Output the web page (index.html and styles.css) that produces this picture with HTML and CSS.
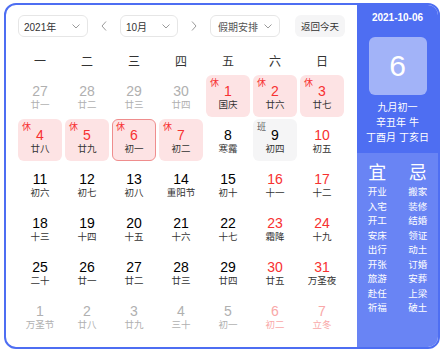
FILE: index.html
```html
<!DOCTYPE html>
<html lang="zh-CN">
<head>
    <meta charset="UTF-8">
    <title>万年历</title>
    <link rel="stylesheet" href="styles.css">
</head>
<body>

    <div class="calendar">
        <div class="main">
            <div class="toolbar">
                <div class="select select-year">
                    <span>2021年</span>
                    <svg width="8" height="5" viewBox="0 0 8 5"><path d="M.5.5 4 4 7.5.5" fill="none" stroke="#9a9a9a"/></svg>
                </div>
                <div class="nav">
                    <svg width="6" height="10" viewBox="0 0 6 10"><path d="M5 .5 1 5l4 4.5" fill="none" stroke="#9a9a9a"/></svg>
                </div>
                <div class="select select-month">
                    <span>10月</span>
                    <svg width="8" height="5" viewBox="0 0 8 5"><path d="M.5.5 4 4 7.5.5" fill="none" stroke="#9a9a9a"/></svg>
                </div>
                <div class="nav">
                    <svg width="6" height="10" viewBox="0 0 6 10"><path d="M1 .5 5 5 1 9.5" fill="none" stroke="#9a9a9a"/></svg>
                </div>
                <div class="select select-holiday">
                    <span>假期安排</span>
                    <svg width="8" height="5" viewBox="0 0 8 5"><path d="M.5.5 4 4 7.5.5" fill="none" stroke="#9a9a9a"/></svg>
                </div>
                <div class="today-btn">返回今天</div>
            </div>

            <div class="weekdays">
                <span>一</span><span>二</span><span>三</span><span>四</span><span>五</span><span>六</span><span>日</span>
            </div>

            <div class="days">
                <div class="day other"><b>27</b><i>廿一</i></div>
                <div class="day other"><b>28</b><i>廿二</i></div>
                <div class="day other"><b>29</b><i>廿三</i></div>
                <div class="day other"><b>30</b><i>廿四</i></div>
                <div class="day rest"><span class="tag">休</span><b>1</b><i>国庆</i></div>
                <div class="day rest"><span class="tag">休</span><b>2</b><i>廿六</i></div>
                <div class="day rest"><span class="tag">休</span><b>3</b><i>廿七</i></div>

                <div class="day rest"><span class="tag">休</span><b>4</b><i>廿八</i></div>
                <div class="day rest"><span class="tag">休</span><b>5</b><i>廿九</i></div>
                <div class="day rest today"><span class="tag">休</span><b>6</b><i>初一</i></div>
                <div class="day rest"><span class="tag">休</span><b>7</b><i>初二</i></div>
                <div class="day"><b>8</b><i>寒露</i></div>
                <div class="day work"><span class="tag">班</span><b>9</b><i>初四</i></div>
                <div class="day weekend"><b>10</b><i>初五</i></div>

                <div class="day"><b>11</b><i>初六</i></div>
                <div class="day"><b>12</b><i>初七</i></div>
                <div class="day"><b>13</b><i>初八</i></div>
                <div class="day"><b>14</b><i>重阳节</i></div>
                <div class="day"><b>15</b><i>初十</i></div>
                <div class="day weekend"><b>16</b><i>十一</i></div>
                <div class="day weekend"><b>17</b><i>十二</i></div>

                <div class="day"><b>18</b><i>十三</i></div>
                <div class="day"><b>19</b><i>十四</i></div>
                <div class="day"><b>20</b><i>十五</i></div>
                <div class="day"><b>21</b><i>十六</i></div>
                <div class="day"><b>22</b><i>十七</i></div>
                <div class="day weekend"><b>23</b><i>霜降</i></div>
                <div class="day weekend"><b>24</b><i>十九</i></div>

                <div class="day"><b>25</b><i>二十</i></div>
                <div class="day"><b>26</b><i>廿一</i></div>
                <div class="day"><b>27</b><i>廿二</i></div>
                <div class="day"><b>28</b><i>廿三</i></div>
                <div class="day"><b>29</b><i>廿四</i></div>
                <div class="day weekend"><b>30</b><i>廿五</i></div>
                <div class="day weekend"><b>31</b><i>万圣夜</i></div>

                <div class="day other"><b>1</b><i>万圣节</i></div>
                <div class="day other"><b>2</b><i>廿八</i></div>
                <div class="day other"><b>3</b><i>廿九</i></div>
                <div class="day other"><b>4</b><i>三十</i></div>
                <div class="day other"><b>5</b><i>初一</i></div>
                <div class="day other weekend"><b>6</b><i>初二</i></div>
                <div class="day other weekend"><b>7</b><i>立冬</i></div>
            </div>
        </div>

        <div class="side">
            <div class="side-top">
                <div class="side-date">2021-10-06</div>
                <div class="side-day">6</div>
                <div class="side-lunar">
                    <div>九月初一</div>
                    <div>辛丑年 牛</div>
                    <div>丁酉月 丁亥日</div>
                </div>
            </div>
            <div class="side-bottom">
                <div class="yiji">
                    <div class="yiji-col">
                        <div class="yiji-title">宜</div>
                        <div>开业</div><div>入宅</div><div>开工</div><div>安床</div><div>出行</div>
                        <div>开张</div><div>旅游</div><div>赴任</div><div>祈福</div>
                    </div>
                    <div class="yiji-col">
                        <div class="yiji-title">忌</div>
                        <div>搬家</div><div>装修</div><div>结婚</div><div>领证</div><div>动土</div>
                        <div>订婚</div><div>安葬</div><div>上梁</div><div>破土</div>
                    </div>
                </div>
            </div>
        </div>
    </div>

</body>
</html>
```

FILE: styles.css
```css
body {
    margin: 0;
    background: #fff;
    font-family: "Liberation Sans", "Noto Sans CJK SC", sans-serif;
    color: #333;
}

.calendar {
    margin: 3px 0 0 4px;
    width: 432px;
    height: 342px;
    border: 2px solid #4e6ef2;
    border-radius: 12px;
    display: flex;
    overflow: hidden;
}

/* 左侧日历 */
.main {
    width: 351px;
    padding: 10px 12px 0;
    box-sizing: border-box;
}

.toolbar {
    display: flex;
    align-items: center;
    height: 22px;
}

.select {
    height: 22px;
    box-sizing: border-box;
    border: 1px solid #e6e6e6;
    border-radius: 6px;
    display: flex;
    align-items: center;
    justify-content: space-between;
    padding: 0 7px 0 5px;
    font-size: 10px;
    color: #333;
}

.select svg {
    display: block;
}

.select-year {
    width: 70px;
}

.select-month {
    width: 58px;
}

.select-holiday {
    width: 70px;
    padding-left: 7px;
    color: #555;
}

.nav {
    width: 32px;
    display: flex;
    justify-content: center;
}

.nav:first-of-type {
    width: 31px;
}

.today-btn {
    margin-left: auto;
    width: 50px;
    height: 22px;
    border-radius: 6px;
    background: #f5f5f6;
    font-size: 9.5px;
    display: flex;
    align-items: center;
    justify-content: center;
}

.weekdays {
    display: grid;
    grid-template-columns: repeat(7, 44px);
    column-gap: 3px;
    margin-top: 14px;
    line-height: 22px;
    font-size: 12px;
    text-align: center;
    color: #333;
}

.days {
    display: grid;
    grid-template-columns: repeat(7, 44px);
    grid-auto-rows: 42px;
    column-gap: 3px;
    row-gap: 2px;
    margin-top: 2px;
}

.day {
    position: relative;
    display: flex;
    flex-direction: column;
    align-items: center;
    padding-top: 8px;
    box-sizing: border-box;
    border-radius: 6px;
}

.day b {
    font-weight: normal;
    font-size: 14px;
    line-height: 16px;
    color: #000;
}

.day i {
    font-style: normal;
    font-size: 9.5px;
    line-height: 11px;
    color: #333;
}

.day.weekend b,
.day.rest b {
    color: #f73131;
}

.day.other b,
.day.other i {
    color: #b0b0b0;
}

.day.other.weekend b,
.day.other.weekend i {
    color: #f9a8a8;
}

.day.rest {
    background: #fde3e4;
}

.day.today {
    border: 1px solid #ef8d8d;
    padding-top: 7px;
}

.day.work {
    background: #f5f5f6;
}

/* 休 / 班 角标 */
.tag {
    position: absolute;
    top: 3px;
    left: 4px;
    font-size: 9px;
    line-height: 11px;
    color: #f73131;
}

.today .tag {
    top: 2px;
    left: 3px;
}

.work .tag {
    color: #666;
}

/* 右侧信息栏 */
.side {
    flex: 1;
    display: flex;
    flex-direction: column;
    color: #fff;
    text-align: center;
}

.side-top {
    background: #4e6ef2;
    padding: 6px 0 8px;
}

.side-date {
    font-size: 10px;
    font-weight: bold;
    line-height: 14px;
}

.side-day {
    width: 58px;
    height: 58px;
    margin: 12px auto 0;
    border-radius: 6px;
    background: rgba(255, 255, 255, 0.48);
    font-size: 30px;
    line-height: 58px;
}

.side-lunar {
    margin-top: 5px;
    font-size: 10px;
    line-height: 15px;
}

.side-bottom {
    flex: 1;
    background: #6984f4;
    padding-top: 8px;
}

.yiji {
    display: grid;
    grid-template-columns: 1fr 1fr;
}

.yiji-col {
    font-size: 9.5px;
    line-height: 14.5px;
}

.yiji-title {
    font-size: 18px;
    line-height: 24px;
}
```
